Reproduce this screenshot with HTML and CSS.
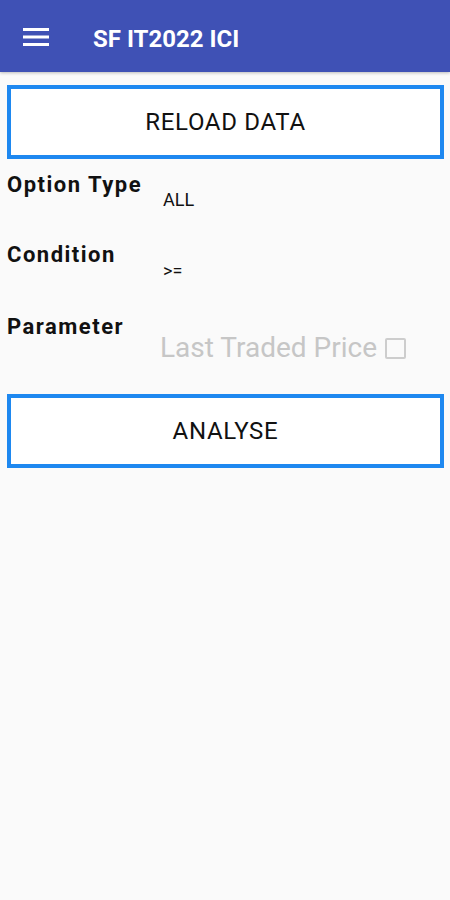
FILE: index.html
```html
<!DOCTYPE html>
<html lang="en">
<head>
    <meta charset="UTF-8">
    <meta name="viewport" content="width=device-width, initial-scale=1.0">
    <title>SF IT2022 ICI</title>
    <link rel="stylesheet" href="styles.css">
</head>
<body>
    <div class="toolbar">
        <button class="menu" aria-label="Menu">
            <svg width="26" height="20" viewBox="0 0 26 20">
                <rect x="0" y="1" width="26" height="3" fill="#fff"/>
                <rect x="0" y="8.5" width="26" height="3" fill="#fff"/>
                <rect x="0" y="16" width="26" height="3" fill="#fff"/>
            </svg>
        </button>
        <div class="title">SF IT2022 ICI</div>
    </div>
    <div class="content">
        <button class="outline-btn reload">RELOAD DATA</button>
        <div class="row row-type">
            <div class="label">Option Type</div>
            <div class="value small">ALL</div>
        </div>
        <div class="row row-cond">
            <div class="label">Condition</div>
            <div class="value small">&gt;=</div>
        </div>
        <div class="row row-param">
            <div class="label">Parameter</div>
            <div class="value param">
                <span>Last Traded Price</span>
                <span class="check"></span>
            </div>
        </div>
        <button class="outline-btn analyse">ANALYSE</button>
    </div>
</body>
</html>
```

FILE: styles.css
```css
body {
    margin: 0;
    background-color: #fafafa;
    font-family: Roboto, "Liberation Sans", sans-serif;
    color: #111;
}
.toolbar {
    height: 72px;
    background-color: #3f51b5;
    display: flex;
    align-items: center;
    box-shadow: 0 1px 3px rgba(0, 0, 0, 0.25);
}
.menu {
    background: none;
    border: none;
    padding: 0;
    margin-left: 23px;
    margin-top: 2px;
    width: 26px;
    height: 20px;
    display: flex;
}
.title {
    margin-left: 44px;
    color: #fff;
    font-size: 24px;
    font-weight: bold;
    margin-top: 5px;
}
.content {
    padding: 13px 6px 0 7px;
}
.outline-btn {
    display: block;
    width: 100%;
    height: 74px;
    background: #fff;
    border: 4px solid #1e88f0;
    font-family: Roboto, "Liberation Sans", sans-serif;
    font-size: 24px;
    letter-spacing: 0.7px;
    color: #111;
    padding: 0;
}
.row {
    display: flex;
    align-items: flex-start;
}
.row-type {
    margin-top: 12px;
    height: 70px;
}
.row-cond {
    height: 72px;
}
.row-param {
    height: 81px;
}
.label {
    width: 156px;
    font-size: 22px;
    line-height: 28px;
    font-weight: bold;
    letter-spacing: 1.5px;
}
.value.small {
    font-size: 18px;
    line-height: 22px;
    padding-top: 18px;
}
.row-cond .value.small {
    padding-top: 19px;
}
.param {
    display: flex;
    align-items: center;
    gap: 8px;
    font-size: 28px;
    line-height: 32px;
    color: #c6c6c6;
    padding-top: 19px;
    margin-left: -3px;
}
.check {
    width: 17px;
    height: 17px;
    border: 2px solid #cdcdcd;
    border-radius: 2px;
}
```
